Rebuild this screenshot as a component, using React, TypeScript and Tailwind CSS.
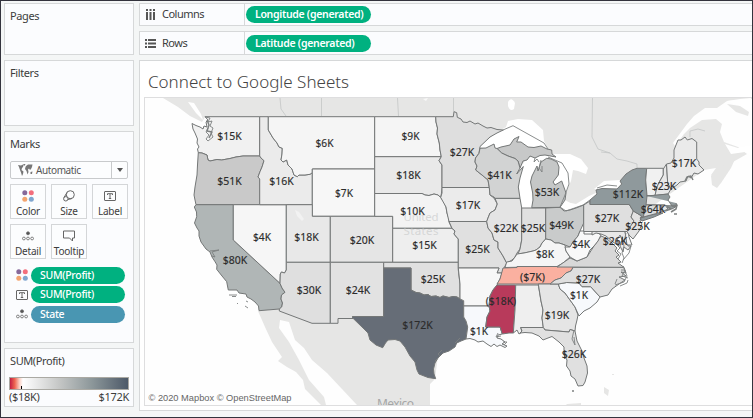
import React from "react";

const FONT = "font-['Noto_Sans','Open_Sans',sans-serif]";

type Shape = { id: string; fill: string; d: string };

const states: Shape[] = [
  { id: "WA", fill: "#f1f1f1", d: "M192 123.5L196 125.5L200 127L203 129L204 126L207 127L206 122L208 120L205 116.7H259.7V156H250L243 156L236 157L230 158.5L221.7 160L217 159.5L210 161L208 160L207 155L202 153L198.3 152.7L197.5 149L199 147L197 143L197.5 139L195 133L193 129Z" },
  { id: "OR", fill: "#c9c9c9", d: "M198.3 152.7L202 153L207 155L208 160L210 161L217 159.5L221.7 160L230 158.5L236 157L243 156H259.7L261 158L264 160.7L262 167L260 171.7L258 177L260 179V204.7H196L195 200L194 195L195 187L197 175L197.5 165Z" },
  { id: "CA", fill: "#b0b6b6", d: "M196 204.7H233.3V240L280 283.3L282 288L285 292.3L281.5 295L281 299L282.5 303L281.7 307L279.3 309L259 310.7L258.5 306L255 302L251 299L247 297L246 294L239 293L237 290L228.3 290L227.5 286L226.7 281.7L222 276L216.7 269.3L217 265L215 261.7L212 257L210 252L206 249L201 242L199 236L199 231L197 228L194.5 223L196.7 216.7L196.5 212L194.3 207Z" },
  { id: "NV", fill: "#f6f6f6", d: "M233.3 204.7H286.3V270L284.5 273L281.5 272L280.3 274L280 283.3L233.3 240Z" },
  { id: "ID", fill: "#ebebeb", d: "M259.7 116.7H268.3V130L273 138L277 143L279 147L282.3 148.3L282 154L281 160L283 162L286.7 160L288 165L292 169L294 175L297.3 176.7L299 175L305 175L310 174.3L312.3 172.7V204.7H259.7V179L258 177L260 171.7L262 167L264 160.7L261 158L259.7 156Z" },
  { id: "MT", fill: "#f5f5f5", d: "M268.3 116.7H374.7V169H312.3V172.7L310 174.3L305 175L299 175L297.3 176.7L294 175L292 169L288 165L286.7 160L283 162L281 160L282 154L282.3 148.3L279 147L277 143L273 138L268.3 130Z" },
  { id: "WY", fill: "#f7f7f7", d: "M312.3 169H374.7V216.3H312.3Z" },
  { id: "UT", fill: "#e8e8e8", d: "M286.3 204.7H312.3V216.3H330.3V262.3H286.3Z" },
  { id: "CO", fill: "#e5e5e5", d: "M330.3 216.3H392.7V262.3H330.3Z" },
  { id: "AZ", fill: "#dfdfdf", d: "M286.3 262.3H330.3V323.3H312L279.3 311V309L281.7 307L282.5 303L281 299L281.5 295L285 292.3L282 288L280 283.3L280.3 274L281.5 272L284.5 273L286.3 270Z" },
  { id: "NM", fill: "#e2e2e2", d: "M330.3 262.3H383.7V316.5H352.5L353 318.5H338V323.3H330.3Z" },
  { id: "ND", fill: "#f5f5f5", d: "M374.7 116.7H435.7L436 122L437.5 128L437 134L439.3 143L440 150L441.3 156.7H374.7Z" },
  { id: "SD", fill: "#e9e9e9", d: "M374.7 156.7H441.3L439 160.7L442 165L442 187.5L441.5 193L440.7 197.5L438 195L434 194L429 195.5L425 195L422 193.5H374.7Z" },
  { id: "NE", fill: "#f3f3f3", d: "M374.7 193.5H422L425 195L429 195.5L434 194L438 195L440.7 197.5L444 202L446 207L447 213L449 219L449 222L452 228.3H392.7V216.3H374.7Z" },
  { id: "KS", fill: "#eeeeee", d: "M392.7 228.3H452L455 231L454 234L456.5 237L458.3 239V262.3H392.7Z" },
  { id: "OK", fill: "#e0e0e0", d: "M383.7 262.3H458.3V270L460 284V299L457 297L453 296.5L449 297.5L443 296L440 297.5L436 296L431 296.5L428 294.5L424 295L420 293L416 292.5L411 290V268H383.7Z" },
  { id: "TX", fill: "#666d77", d: "M383.7 268H411V290L416 292.5L420 293L424 295L428 294.5L431 296.5L436 296L440 297.5L443 296L449 297.5L453 296.5L457 297L460 299L463.7 300.7V317L466 321L467.7 327L467 332L466 339L461 341L456.7 343L455 347L449 351L443 353L438 358L435 363L433.5 369L434 374L435.7 378.7L428 377.5L419 374L417 370L415 362L410 356L405 347L400 341L395 339.5L388 340L385.5 343L382.7 347.7L376 345L370 340L368 333L363 328L352 317.3L353 316.5H383.7Z" },
  { id: "MN", fill: "#dedede", d: "M435.7 116.7H453.3L454 111.7L456.7 112.7L457.3 117.3L461 119L463 122L467 122.5L470 121L475 124L478 123L483 126L487 128L491 127.5L497 129.5L503.3 130L497 133L490 137L480 146.5L479 153.3L475.5 158L475 162L477 166L475.7 170L482 175L488 180L489.3 187.5H442V165L439 160.7L441.3 156.7L440 150L439.3 143L437 134L437.5 128L436 122Z" },
  { id: "IA", fill: "#ebebeb", d: "M442 187.5H489.3L490 195L494 198L497.3 204L495 210L490 213L488 218L486.7 221.5H449L447 213L446 207L440.7 197.5L442 193Z" },
  { id: "MO", fill: "#e0e0e0", d: "M449 221.5H486.7L488 228L492 233L494 240L498 242V248L503 256L506.7 263L504 268L502 273H497L499 268H458.3V239L456.5 237L454 234L455 231L452 228.3Z" },
  { id: "AR", fill: "#f7f7f7", d: "M458.3 268H499L497 273H502L500 279L497 285L493 290L490 296L489 306H463.7V300.7L460 299V284Z" },
  { id: "LA", fill: "#f7f9fc", d: "M463.7 306H489L490 311L487 317L485.7 327H500L502.3 334L498 335L497 338L501 339L505 342L502 344L507 346L505 347.5L500 345L497 346.5L494 344L491 346.5L487 344L483 341L478 342L475 340L470 338.5L466 339L467 332L467.7 327L466 321L463.7 317Z" },
  { id: "IL", fill: "#e4e4e4", d: "M495 198.3H520L521.7 208V240L520 249L517 253L515 257L512 260L506.7 263L503 256L498 248V242L494 240L492 233L488 228L486.7 221.5L488 218L490 213L495 210L497.3 204Z" },
  { id: "IN", fill: "#e0e0e0", d: "M521.7 208H545.7V239L542 243L540 247L536 250L533 251L529 252L524 253L518 254L520 249L521.7 240Z" },
  { id: "OH", fill: "#c9cbcb", d: "M545.7 208L560 207.3L564 211L570 210L576 208L583.7 205V223L580 231L578 236L573 242L570 247L565 245L559 243L555 243L551 240L545.7 239Z" },
  { id: "KY", fill: "#f5f5f5", d: "M505 267.5L506.7 262L512 261L515 257L517 254L524 253L533 251L536 250L540 247L542 243L545.7 239L551 240L555 243L559 243L565 245L566 251L570 257L563 263L557 266.5Z" },
  { id: "TN", fill: "#fab0a0", d: "M503 268L517 267.5V266.5H573.3L571 271L566 273L561 278L555 280L550 284H497L500 279Z" },
  { id: "MS", fill: "#b83a5b", d: "M497 285H515.7L515 310L513.3 333L509 333L502.3 334L500 327H485.7L487 317L490 311L489 306L490 296L493 290Z" },
  { id: "AL", fill: "#efefef", d: "M515.7 285H538.3L541 301L543 310L542 318L543.3 327.5H520.7L522 332L519 334L517 330L513.3 333L515 310Z" },
  { id: "GA", fill: "#e5e5e5", d: "M538.3 284H558.3L560 289L565 293L570 300L575 307L578 315L577 320L575.5 326L575 331L570 329.5L569 332L545 330L543.3 327.5L542 318L543 310L541 301Z" },
  { id: "FL", fill: "#e0e0e0", d: "M520.7 327.5H543.3L545 330L569 332L570 329.5L575 331L577 341L582 351L584 358L587 366L587.5 373L585 382L583 385.5L578 386L575 379L571 376L570 371L566.5 366L567 360L564 355L564 347L559 342L552 336.5L548 338L543 340L539 336L532 333L525 332.5L520 333L522 331Z" },
  { id: "SC", fill: "#f7f9fc", d: "M558.3 284L566.7 282.5L579 283L582 286.7H590.7L600 297L597 302L590 308L584 311L579 316L575 307L570 300L565 293L560 289Z" },
  { id: "NC", fill: "#dfdfdf", d: "M573.3 267.3H624L626 273L621 272L626 276L619 277L625 280L619 284L612 289L608 295L600 297L590.7 286.7H582L579 283L566.7 282.5L558.3 284H550L555 280L561 278L566 273L571 271Z" },
  { id: "VA", fill: "#d8d8d8", d: "M557 267L570 258L577 261L587 257L594 246L601 236L606 238L613 244L617 248L615 251L619 255L616 257L621 262L618 263L624 267.3Z" },
  { id: "WV", fill: "#f8f8f8", d: "M565 247L570 247L573 242L578 236L580 231H584V234H592L596 232L601 235L598 241L594 246L590 250L587 257L577 261L570 257L566 251Z" },
  { id: "MD", fill: "#e8e8e8", d: "M592 231.5H625L628 246H631L628 250L624 247L623 252L620 246L622 240L620 235L617 240L619 246L613 242L606 236L601 234L596 233L592 235Z" },
  { id: "DE", fill: "#f5f5f5", d: "M625 231.5L628 231L629 237L632 245H627Z" },
  { id: "PA", fill: "#dfdfdf", d: "M583.7 205L590 201V204.5H629.3L633.3 211L631 217L634 221L630 229L627 231.5H583.7Z" },
  { id: "NJ", fill: "#e3e3e3", d: "M633.3 211L641.7 216L640 221L642 224L639 231L633 239L629 235L627 231.5L634 221L631 217Z" },
  { id: "NY", fill: "#8f999c", d: "M590 204.5V200L597 194L596 190L602 188.5L617 189L621.7 184L620 181L626 174L632 170L637 168.3H646.7L645.7 180L647 196L646 205L643.3 216L641 218L650 215L663 213L654 217L642 221L640 218L641.7 216L633.3 211L629.3 204.5Z" },
  { id: "VT", fill: "#f1f1f1", d: "M646.7 168.3H663.3V175L659.3 182L657 187L655 195.5H647L645.7 180Z" },
  { id: "NH", fill: "#e8e8e8", d: "M663.3 169L666.5 164L667.7 183L671 189L668 194L655 195.5L657 187L659.3 182L663.3 175Z" },
  { id: "ME", fill: "#eaeaea", d: "M666.5 164L671 163L674 158V150L678 140L681 140L685 137L687.3 140L692 138.5L696.7 142V159L699 162L699 165L704 170L698 174L694 173L691 178L688 176L686 181L680 182L677 185L671 189L667.7 183Z" },
  { id: "MA", fill: "#929b9d", d: "M646.7 196L668 194L670 197L668 200L672 206L677 206L676 203M677 206L672 209L668 207L665 205H646Z" },
  { id: "CT", fill: "#d9dbdb", d: "M646 205H662V212L643.3 217Z" },
  { id: "RI", fill: "#e6e6e6", d: "M662 205H665L668 209L662 212Z" },
  { id: "MIU", fill: "#c7c8c8", d: "M497 148.5L501 147L510 145L514 139L519 136.5L516.7 142L521 142L528 147L534 147.5L541 146L547 149L551.7 150L552 154L556 157L545 155L540 155.5L535 158L530 156L527 160L523 161L520 168L518 161L515 158.5L508 156L501.7 153Z" },
  { id: "WI", fill: "#d2d3d3", d: "M480 148.3L486 148L494 144L495 148L497 148.5L501.7 153L508 156L515 158.5L518 161L520 168L516.7 174L523.3 166.5L520 178L518.3 187L520 198.3H495L494 197L490 195L489.3 187.5L488 180L482 175L475.7 170L477 166L475 162L475.5 158L479 153.3Z" },
  { id: "MI", fill: "#c5c7c7", d: "M531.7 207.7L533 200L532.7 193L530.5 182L532 176L535 170L537 166L538 171L541 162L546.7 158.3L551 159L557 162L559 167L558.3 175L553 182L555 185L561.7 181L566 193L565 200L560 207.3Z" },
];

const labels: [string, number, number][] = [
  ["$15K", 229.5, 136.5], ["$51K", 229.5, 181.5], ["$16K", 281.5, 181], ["$6K", 324.5, 143.5],
  ["$9K", 410.5, 136.5], ["$18K", 408.5, 175.5], ["$7K", 344, 193.5], ["$10K", 412.5, 211],
  ["$27K", 462, 152.5], ["$41K", 499.5, 175.5], ["$53K", 547, 192], ["$17K", 468, 205],
  ["$22K", 506, 228.5], ["$25K", 533, 228.5], ["$49K", 561.5, 225.5], ["$27K", 607, 218.5],
  ["$112K", 628, 194], ["$23K", 664, 186], ["$64K", 653, 209.5], ["$25K", 637.5, 226.5],
  ["$17K", 684, 163], ["$4K", 262, 237], ["$18K", 306.5, 237], ["$20K", 362, 240.5],
  ["$15K", 424.5, 245.5], ["$25K", 477.5, 249], ["$8K", 545, 254], ["$4K", 581, 244.5],
  ["$26K", 615, 241.5], ["$80K", 235, 260.5], ["$30K", 309, 290.5], ["$24K", 358, 290.5],
  ["$25K", 433, 279.5], ["($7K)", 532.5, 277], ["$27K", 588, 279.5], ["$1K", 579, 295.5],
  ["($18K)", 501, 301.5], ["$19K", 557, 315], ["$1K", 479, 331], ["$172K", 417.5, 325], ["$26K", 574, 354],
];

function labelWidth(t: string) {
  if (t === "($18K)" || t.length === 5 && t.startsWith("$")) return 30.5;
  if (t === "($7K)") return 25;
  return t.length === 3 ? 18 : 24.5;
}

function MapView() {
  return (
    <svg viewBox="145 98 607 307" className={`block h-[307px] w-[607px] ${FONT}`}>
      <rect x="145" y="98" width="607" height="307" fill="#fefefe" />
      <g fill="#e6e6e5">
        <path d="M163 98H752V99L727 101L717 108L705 108L694 116L687 124L673 143L675 146L684 134L690 128L702 120L716 119L722 124L720 132L724 142L738 147L747 154L740 158L731 163L721 175L716 180L711 175L716 168L704 170L640 215L590 215L450 130L205 117L202 122L190 116L178 107Z" />
        <path d="M711 176L724 165L736 157L731 168L721 183L717 188L712 185Z" />
        <path d="M258 311L281 309L352 310L440 340L435 379L430 384V405H357L342 389L327 373L312 360L304 348L295 340L289 322L280 320L279 328L289 342L299 360L309 380L324 397L326 405H321L305 389L303 380L296 372L287 367L278 361L282 357L272 342L265 327Z" />
        <path d="M604 387L609 390L608 396L604 393ZM612 374h2v1h-2zM567 404L581 403V405H566Z" />
      </g>
      <path d="M727 101L740 106L751 111V98L740 99ZM725 144L738 148L752 145V156L745 152L731 154Z" fill="#fff" />
      <path d="M727 104L740 106L749 112L748 116L736 112Z" fill="#e6e6e5" />
      <path d="M188 102L194 103L201 114L203 120L196 113Z" fill="#fff" />
      <g fill="#fff">
        <path d="M480 147L494 134L506 127L508 121L518 119L532 120L543 130L544 141L548 149L500 151Z" />
        <path d="M508 102Q511 96 515 103L514 109Q510 112 508 106Z" />
        <path d="M547 154L570 154L581 159L588 168L586 174L578 171L573 170L571 181L566 192L558 190L552 178Z" />
        <path d="M560 207L566 202L576 204L589 196L598 192L596 200L583 206L570 212Z" />
        <path d="M594 189L604 181L620 180L624 181L620 188L604 190Z" />
        <path d="M527 158L545 154L554 158L537 171L531 182L533 195L531 205L526 209L519 207L518 188L521 174L516 174Z" />
      </g>
      <g fill="none" stroke="#bfc1c1" strokeWidth=".7">
        <path d="M280 98L281 109L286 116M321.5 98V116M397.5 98L398.5 116M453.5 98V112M592.5 98L592 137L598 149L610 153M601 152L610 153L617 159L627 161L637 164V168M690 137V131L698 129L705 131" />
      </g>
      <path d="M423 99L428 98L426 101Z" fill="#f8f8f8" />
      <g stroke="#747777" strokeWidth="1" strokeLinejoin="round">
        {states.map((s) => (
          <path key={s.id} d={s.d} fill={s.fill} />
        ))}
      </g>
      <g fill="none" stroke="#7d8080" strokeWidth=".9" strokeLinejoin="round">
        <path d="M503 130L513 125.7L544 143L548 149M548 157L562 163L568 173L569 184L565 195L560 207L566 211L583 205L590 200M597 188L607 185L617 186" />
        <path d="M205 117L210 118L208 122L212 121L210 126L213 128L211 133L213 137L208 141L206 139L209 135L206 132L208 128" />
        <path d="M207 120L209 125L207 131L212 132L209 138" strokeWidth="1.4" />
        <path d="M210 251L219 250L212 252L215 257L212 256M229 295H237M232 296.5H236M237 303L238 304M246 301L248 302M245 306L248 308" />
        <path d="M535 158L534 162L537 159L539 162M541 160L539 168L542 172L542 166" />
        <path d="M617 238L619 243L616 244L620 248L617 251L621 254L618 259M622 236L624 246L622 253L624 258L622 263M626 233L624 242M631 246L629 253L623 260" />
        <path d="M621 270H625L622 276L628 278M623 266L627 276L624 282L615 285M628 280L627 283L620 286M617 279L615 284" />
        <path d="M672 206L677 205L676 209L671 212M667 207L671 209L665 211M674 214H677" strokeWidth="1.5" />
        <path d="M574 330L572 339L575 345L574 337M564 352L567 357L564 358M498 333L496 337L501 336M504 345L507 342L503 342" />
        <path d="M442 350L438 354L440 356L435 361M460 338L455 343" />
        <path d="M685 181L687 177L691 176L693 180" strokeWidth="1.5" />
        <path d="M572 391H574" strokeWidth="1.5" />
      </g>
      <path d="M295 210l4 2 5 7-2 2-5-5z" fill="#f2f2f2" />
      <g fill="#c6c8c8" fillOpacity=".65" fontSize="11.5" textAnchor="middle">
        <text x="421" y="220.5" textLength="35">United</text>
        <text x="421" y="234.5" textLength="35">States</text>
      </g>
      <text x="377" y="408" fontSize="12" fill="#a5a7a7" textLength="37">Mexico</text>
      <g fill="#2b2b2b" stroke="#2b2b2b" strokeWidth=".15" fontSize="11" textAnchor="middle">
        {labels.map(([t, x, y], i) => (
          <text key={i} x={x} y={y + 3.7} textLength={labelWidth(t)} lengthAdjust="spacingAndGlyphs">{t}</text>
        ))}
      </g>
      <text x="148.5" y="401" fontSize="9" fill="#666" textLength="143" lengthAdjust="spacingAndGlyphs" className="font-['Liberation_Sans',sans-serif]">© 2020 Mapbox © OpenStreetMap</text>
    </svg>
  );
}

function ColorDots() {
  return (
    <svg viewBox="0 0 12 12" className="size-3 shrink-0">
      <circle cx="2.8" cy="2.8" r="2.5" fill="#86699a" />
      <circle cx="9.3" cy="2.8" r="2.5" fill="#f36e7c" />
      <circle cx="2.8" cy="9.2" r="2.5" fill="#f3a46f" />
      <circle cx="9.3" cy="9.2" r="2.5" fill="#7fa6cf" />
    </svg>
  );
}

function LabelIcon() {
  return (
    <svg viewBox="0 0 12 12" className="size-3 shrink-0" fill="none" stroke="#666">
      <rect x=".5" y="1.5" width="11" height="9" rx=".5" />
      <path d="M3.5 5V3.7H8.5V5M6 3.7V8.5M4.8 8.5H7.2" />
    </svg>
  );
}

function DetailIcon() {
  return (
    <svg viewBox="0 0 12 12" className="size-3 shrink-0" fill="none" stroke="#666" strokeWidth=".8">
      <circle cx="6" cy="3.3" r="1.5" fill="#555" />
      <circle cx="1.9" cy="8.5" r="1.4" />
      <circle cx="6" cy="8.5" r="1.4" />
      <circle cx="10.1" cy="8.5" r="1.4" />
    </svg>
  );
}

function SizeIcon() {
  return (
    <svg viewBox="0 0 12 12" className="size-3 shrink-0" fill="none" stroke="#666">
      <circle cx="7.3" cy="4.7" r="4" />
      <circle cx="2.8" cy="8.8" r="2.2" fill="#fbfcfd" />
      <path d="M1 7.5L4 2.5M5 9.5L9 8.5" />
    </svg>
  );
}

function TooltipIcon() {
  return (
    <svg viewBox="0 0 12 12" className="size-3 shrink-0" fill="none" stroke="#666" strokeLinejoin="round">
      <path d="M.5 1H11.5V8H9.5V11L6.5 8H.5Z" />
    </svg>
  );
}

function WorldIcon() {
  return (
    <svg viewBox="0 0 15 12" className="h-3 w-[15px] shrink-0" fill="#777">
      <path d="M0 1L3 1.5L6 0L5 3L4 4L3.5 6L5.5 7.5L5 10L4 12L3 8.5L2 6L1 3ZM5.5 0H7.5L6.5 2ZM8 2L10 .5L14.5 .5L14 3L13 5L12 6L11 4.5L10 5.5L10.5 8L9.5 10.5L8.5 7L7 5L7.5 3ZM12.5 8L14.5 7.5L14 10H12.5Z" />
    </svg>
  );
}

function Panel({ className, children }: { className: string; children?: React.ReactNode }) {
  return <section className={`shrink-0 border border-[#d6d8d9] bg-[#fbfcfe] ${className}`}>{children}</section>;
}

function MarkButton({ icon, label }: { icon: React.ReactNode; label: string }) {
  return (
    <div className="flex h-[35px] w-9 flex-col items-center border border-[#d4d6d8] bg-[#fcfdfe] pt-[5px]">
      {icon}
      <span className="mt-[2px] text-[10px] leading-[14px] tracking-[-0.2px] text-[#3c3c3c]">{label}</span>
    </div>
  );
}

function MarkPill({ icon, label, color }: { icon: React.ReactNode; label: string; color: string }) {
  return (
    <div className="flex h-[17px] items-center gap-[3px]">
      {icon}
      <span className={`h-[17px] w-[94px] rounded-full pl-[9px] text-[10.5px] leading-[16px] font-medium tracking-[-0.3px] text-white ${color}`}>{label}</span>
    </div>
  );
}

function Shelf({ className, icon, name, field }: { className: string; icon: React.ReactNode; name: string; field: string }) {
  return (
    <div className={`flex shrink-0 items-center border border-r-0 border-[#d6d8d9] bg-[#fbfcfe] ${className}`}>
      <div className="flex h-full w-[105px] items-center gap-[6px] border-r border-[#d6d8d9] pl-[5px] text-[11px] tracking-[-0.5px] text-[#3c3c3c]">
        {icon}
        <span>{name}</span>
      </div>
      <span className="ml-[1px] h-[17px] w-[125px] rounded-full bg-[#00b180] pl-[9px] text-[10.5px] leading-[16px] font-semibold tracking-[-0.3px] whitespace-nowrap text-white">{field}</span>
    </div>
  );
}

export default function App() {
  return (
    <main className={`flex h-[418px] w-[753px] gap-[5px] overflow-hidden border border-[#33333d] bg-[#f4f6f6] pt-[2px] pl-[3px] ${FONT}`}>
      <aside className="flex w-[130px] shrink-0 flex-col gap-[5px] text-[11px] tracking-[-0.4px] text-[#3c3c3c]">
        <Panel className="h-[52px] pt-[4px] pl-[5px]">Pages</Panel>
        <Panel className="h-[66px] pt-[4px] pl-[5px]">Filters</Panel>
        <Panel className="h-[212px] px-[5px] pt-[4px]">
          <h2 className="h-[25px]">Marks</h2>
          <div className="flex h-[18px] items-center rounded-xs border border-[#c8cacc] bg-[#fcfdfe]">
            <div className="flex flex-1 items-center gap-[3px] pl-[7px] text-[10px] text-[#555]">
              <WorldIcon />
              <span>Automatic</span>
            </div>
            <div className="flex h-full w-4 items-center justify-center border-l border-[#c8cacc]">
              <svg viewBox="0 0 6 4" className="h-1 w-1.5" fill="#555"><path d="M0 0H6L3 4Z" /></svg>
            </div>
          </div>
          <div className="mt-[5px] grid grid-cols-3 gap-[5px]">
            <MarkButton icon={<ColorDots />} label="Color" />
            <MarkButton icon={<SizeIcon />} label="Size" />
            <MarkButton icon={<LabelIcon />} label="Label" />
            <MarkButton icon={<DetailIcon />} label="Detail" />
            <MarkButton icon={<TooltipIcon />} label="Tooltip" />
          </div>
          <div className="mt-[7.5px] flex flex-col gap-[2.5px] pl-[6px]">
            <MarkPill icon={<ColorDots />} label="SUM(Profit)" color="bg-[#00b180]" />
            <MarkPill icon={<LabelIcon />} label="SUM(Profit)" color="bg-[#00b180]" />
            <MarkPill icon={<DetailIcon />} label="State" color="bg-[#4996b2]" />
          </div>
        </Panel>
        <Panel className="h-[59px] px-[4px] pt-[4px]">
          <h2 className="h-[24px] pl-px">SUM(Profit)</h2>
          <div className="relative h-[13px] border border-[#aaa9a3] bg-[linear-gradient(to_right,#c11d43_0%,#ee6550_4%,#fbd0c4_8%,#ffffff_11%,#f2f2f2_18%,#c4c6c5_42%,#8b9699_70%,#4d5968_100%)]">
            <span className="absolute bottom-0 left-[11px] h-[3px] w-px bg-black" />
          </div>
          <div className="flex justify-between leading-[14px] tracking-[-0.3px]"><span>($18K)</span><span>$172K</span></div>
        </Panel>
      </aside>
      <div className="flex min-w-0 flex-1 flex-col gap-[5px]">
        <Shelf
          className="h-[23px]"
          name="Columns"
          field="Longitude (generated)"
          icon={<svg viewBox="0 0 11 11" className="size-[11px]" fill="#555"><path d="M1 0h2v2H1zM1 3h2v8H1zM4.5 0h2v2h-2zM4.5 3h2v8h-2zM8 0h2v2H8zM8 3h2v8H8z" /></svg>}
        />
        <Shelf
          className="h-6"
          name="Rows"
          field="Latitude (generated)"
          icon={<svg viewBox="0 0 11 11" className="size-[11px]" fill="#555"><path d="M0 1h2v2H0zM3 1h8v2H3zM0 4.5h2v2H0zM3 4.5h8v2H3zM0 8h2v2H0zM3 8h8v2H3z" /></svg>}
        />
        <section className="h-[351px] border border-r-0 border-[#d6d8d9] bg-white pl-[4px]">
          <h1 className="h-9 pl-[4px] text-[17px] leading-[41px] font-light whitespace-nowrap text-[#444]">Connect to Google Sheets</h1>
          <div className="h-[309px] border border-r-0 border-[#dededf]"><MapView /></div>
        </section>
      </div>
    </main>
  );
}
